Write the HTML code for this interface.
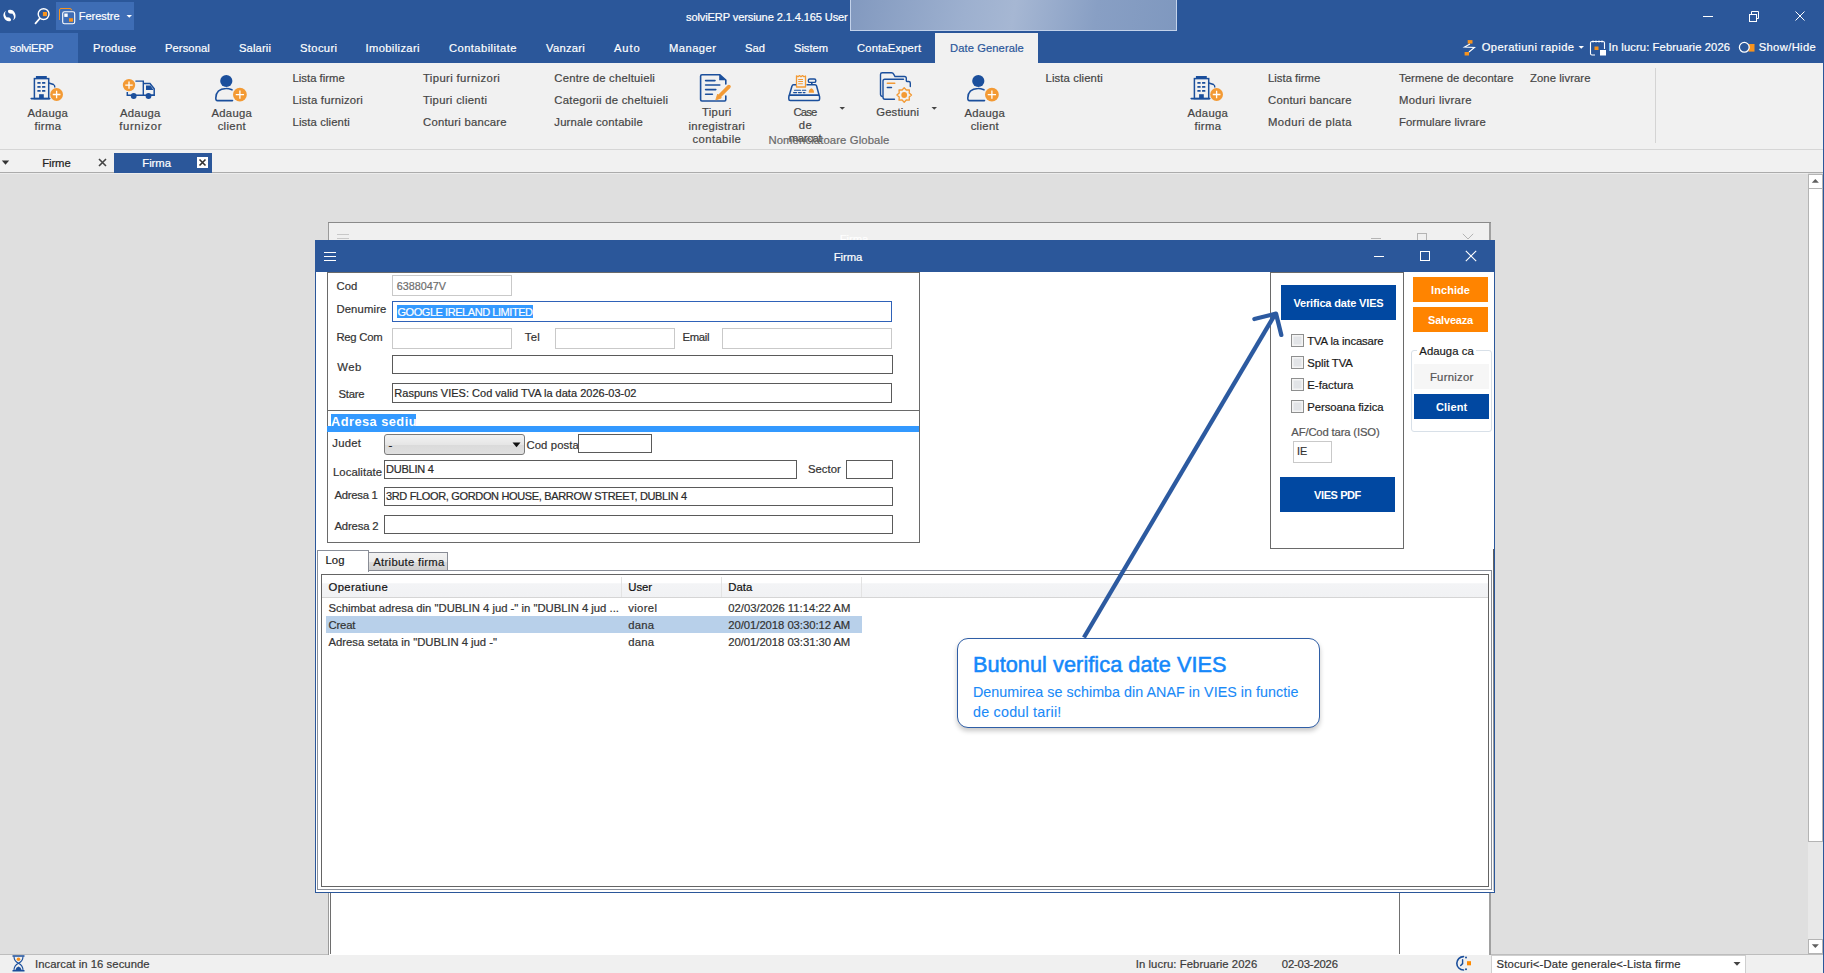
<!DOCTYPE html>
<html><head><meta charset="utf-8"><title>solviERP</title>
<style>
html,body{margin:0;padding:0;width:1824px;height:973px;overflow:hidden;background:#dfdfdf;}
body{position:relative;font-family:"Liberation Sans",sans-serif;}
.t{position:absolute;white-space:nowrap;-webkit-text-stroke:0.2px currentColor;}
.b{position:absolute;box-sizing:content-box;}
svg.b{overflow:visible;}
</style></head><body>
<div class="b" style="left:0px;top:0px;width:1824px;height:63px;background:#2b579a"></div>
<div class="b" style="left:0px;top:63px;width:1824px;height:87px;background:#f1f1f1"></div>
<div class="b" style="left:0px;top:149px;width:1824px;height:1px;background:#d6d6d6"></div>
<div class="b" style="left:0px;top:150px;width:1824px;height:22px;background:#f1f1f1"></div>
<div class="b" style="left:0px;top:172px;width:1824px;height:1px;background:#ababab"></div>
<div class="b" style="left:0px;top:173px;width:1824px;height:781px;background:#dfdfdf"></div>
<div class="b" style="left:0px;top:173px;width:1808px;height:1px;background:#ececec"></div>
<div class="b" style="left:0px;top:954px;width:1824px;height:1px;background:#bdbdbd"></div>
<div class="b" style="left:0px;top:955px;width:1824px;height:18px;background:#f0f0f0"></div>
<div class="b" style="left:1823px;top:63px;width:1px;height:910px;background:#2b579a"></div>
<svg class="b" style="left:0px;top:0px" width="20" height="32" viewBox="0 0 20 32"><path d="M8.3 9.9 A5.8 5.8 0 0 1 13 20.3 A4.9 4.9 0 0 0 12.2 13.6 Q10.6 13.9 9.2 13.3 Q7.2 12.2 8.3 9.9Z" fill="#fff"/><path d="M8.3 9.9 A5.8 5.8 0 0 1 13 20.3 A4.9 4.9 0 0 0 12.2 13.6 Q10.6 13.9 9.2 13.3 Q7.2 12.2 8.3 9.9Z" fill="#fff" transform="rotate(180 9.5 15.5)"/></svg>
<svg class="b" style="left:33px;top:6px" width="18" height="20" viewBox="0 0 18 20"><circle cx="10.6" cy="8.1" r="5.4" fill="none" stroke="#fff" stroke-width="1.4"/><line x1="2.5" y1="17.3" x2="6.7" y2="12.5" stroke="#fff" stroke-width="1.8" stroke-linecap="round"/><rect x="9.9" y="6" width="4.1" height="4.1" fill="#f7931e"/></svg>
<div class="b" style="left:56px;top:2px;width:78px;height:28px;background:#3e6db5"></div>
<svg class="b" style="left:58px;top:7px" width="20" height="19" viewBox="0 0 20 19"><path d="M1.5 13 V3 Q1.5 1.5 3 1.5 H12 Q13.5 1.5 13.5 3.2" fill="none" stroke="#f7931e" stroke-width="1"/><rect x="4.7" y="4.7" width="12" height="12" rx="1.8" fill="none" stroke="#fff" stroke-width="1.1"/><rect x="6.3" y="6.5" width="3.4" height="3.4" fill="#fff"/><rect x="11" y="11.2" width="4" height="3.5" fill="#f7931e"/></svg>
<div class="t" style="left:78.80px;top:11.49px;font-size:11px;line-height:11px;color:#fff;font-weight:normal;letter-spacing:-0.024px;">Ferestre</div>
<svg class="b" style="left:126px;top:14px" width="7" height="5" viewBox="0 0 7 5"><path d="M0.5 1 H6 L3.25 3.8Z" fill="#fff"/></svg>
<div class="t" style="left:686.00px;top:12.00px;font-size:11.1px;line-height:11.1px;color:#fff;font-weight:normal;letter-spacing:-0.125px;">solviERP versiune 2.1.4.165 User</div>
<div class="b" style="left:850px;top:0;width:325px;height:30px;border:1px solid #c3d2ea;border-top:none;background:linear-gradient(100deg,#8299bf 0%,#9db0cf 35%,#a6b7d3 50%,#889fc4 75%,#7f98bf 100%)"></div>
<div class="b" style="left:1703px;top:16px;width:10px;height:1px;background:#fff"></div>
<svg class="b" style="left:1748px;top:10px" width="12" height="12" viewBox="0 0 12 12"><rect x="1.5" y="4.5" width="7" height="7" fill="none" stroke="#fff" stroke-width="1"/><path d="M3.5 4.5 V1.5 H10.5 V8.5 H8.5" fill="none" stroke="#fff" stroke-width="1"/></svg>
<svg class="b" style="left:1795px;top:11px" width="10" height="10" viewBox="0 0 10 10"><path d="M0.5 0.5 L9.5 9.5 M9.5 0.5 L0.5 9.5" stroke="#fff" stroke-width="1"/></svg>
<div class="b" style="left:0px;top:33px;width:78px;height:30px;background:#3e6db5"></div>
<div class="b" style="left:935px;top:33px;width:103px;height:30px;background:#f1f1f1"></div>
<div class="t" style="left:10.00px;top:42.52px;font-size:11.2px;line-height:11.2px;color:#fff;font-weight:normal;letter-spacing:-0.270px;">solviERP</div>
<div class="t" style="left:93.00px;top:42.52px;font-size:11.2px;line-height:11.2px;color:#fff;font-weight:normal;letter-spacing:0.221px;">Produse</div>
<div class="t" style="left:165.00px;top:42.52px;font-size:11.2px;line-height:11.2px;color:#fff;font-weight:normal;letter-spacing:0.085px;">Personal</div>
<div class="t" style="left:239.00px;top:42.52px;font-size:11.2px;line-height:11.2px;color:#fff;font-weight:normal;letter-spacing:0.151px;">Salarii</div>
<div class="t" style="left:300.00px;top:42.52px;font-size:11.2px;line-height:11.2px;color:#fff;font-weight:normal;letter-spacing:0.362px;">Stocuri</div>
<div class="t" style="left:365.50px;top:42.52px;font-size:11.2px;line-height:11.2px;color:#fff;font-weight:normal;letter-spacing:0.364px;">Imobilizari</div>
<div class="t" style="left:449.00px;top:42.52px;font-size:11.2px;line-height:11.2px;color:#fff;font-weight:normal;letter-spacing:0.433px;">Contabilitate</div>
<div class="t" style="left:546.00px;top:42.52px;font-size:11.2px;line-height:11.2px;color:#fff;font-weight:normal;letter-spacing:0.282px;">Vanzari</div>
<div class="t" style="left:614.00px;top:42.52px;font-size:11.2px;line-height:11.2px;color:#fff;font-weight:normal;letter-spacing:0.895px;">Auto</div>
<div class="t" style="left:669.00px;top:42.52px;font-size:11.2px;line-height:11.2px;color:#fff;font-weight:normal;letter-spacing:0.457px;">Manager</div>
<div class="t" style="left:745.00px;top:42.52px;font-size:11.2px;line-height:11.2px;color:#fff;font-weight:normal;letter-spacing:0.047px;">Sad</div>
<div class="t" style="left:794.00px;top:42.52px;font-size:11.2px;line-height:11.2px;color:#fff;font-weight:normal;letter-spacing:-0.041px;">Sistem</div>
<div class="t" style="left:857.00px;top:42.52px;font-size:11.2px;line-height:11.2px;color:#fff;font-weight:normal;letter-spacing:0.181px;">ContaExpert</div>
<div class="t" style="left:950.00px;top:42.52px;font-size:11.2px;line-height:11.2px;color:#2b579a;font-weight:normal;letter-spacing:0.086px;">Date Generale</div>
<svg class="b" style="left:1462px;top:39px" width="14" height="18" viewBox="0 0 14 18"><rect x="5.7" y="1.1" width="4.8" height="3.5" fill="#f7931e"/><rect x="2.6" y="13" width="4.4" height="3.5" fill="#f7931e"/><path d="M8 5 L2.5 8 L12.5 8.5 L7 13" fill="none" stroke="#fff" stroke-width="1.1"/></svg>
<div class="t" style="left:1481.70px;top:41.52px;font-size:11.2px;line-height:11.2px;color:#fff;font-weight:normal;letter-spacing:0.404px;">Operatiuni rapide</div>
<svg class="b" style="left:1578px;top:45px" width="7" height="5" viewBox="0 0 7 5"><path d="M0.5 1 H6 L3.25 3.8Z" fill="#fff"/></svg>
<svg class="b" style="left:1589px;top:39px" width="18" height="18" viewBox="0 0 18 18"><path d="M6 16 H3 Q1.5 16 1.5 14.5 V4 Q1.5 2.5 3 2.5 H14 Q15.5 2.5 15.5 4 V10" fill="none" stroke="#fff" stroke-width="1.1"/><path d="M4 1.5 v2 M7 1.5 v2 M10 1.5 v2 M13 1.5 v2" stroke="#fff" stroke-width="1"/><rect x="5.5" y="7.5" width="4" height="3.5" fill="#f7931e"/><rect x="11" y="11" width="6" height="5.5" fill="#fff"/></svg>
<div class="t" style="left:1608.50px;top:41.52px;font-size:11.2px;line-height:11.2px;color:#fff;font-weight:normal;letter-spacing:0.118px;">In lucru: Februarie 2026</div>
<svg class="b" style="left:1738px;top:41px" width="18" height="13" viewBox="0 0 18 13"><rect x="10.5" y="3" width="6" height="7.6" fill="#f7931e"/><circle cx="6.3" cy="6.3" r="4.9" fill="#2b579a" stroke="#fff" stroke-width="1.3"/></svg>
<div class="t" style="left:1758.70px;top:41.52px;font-size:11.2px;line-height:11.2px;color:#fff;font-weight:normal;letter-spacing:0.374px;">Show/Hide</div>
<svg class="b" style="left:25px;top:68px" width="50" height="40" viewBox="0 0 50 40"><rect x="10.9" y="8" width="10.9" height="2.3" fill="#1b4f9c"/><rect x="9.4" y="10.6" width="14.3" height="20" fill="none" stroke="#1b4f9c" stroke-width="1.5"/><line x1="6.2" y1="30.6" x2="24.7" y2="30.6" stroke="#1b4f9c" stroke-width="1.6" stroke-linecap="round"/><rect x="12.3" y="14" width="3.4" height="1.8" rx="0.6" fill="#1b4f9c"/><rect x="12.3" y="18" width="3.4" height="1.8" rx="0.6" fill="#1b4f9c"/><rect x="12.3" y="22" width="3.4" height="1.8" rx="0.6" fill="#1b4f9c"/><rect x="17" y="14" width="3.4" height="1.8" rx="0.6" fill="#1b4f9c"/><rect x="17" y="18" width="3.4" height="1.8" rx="0.6" fill="#1b4f9c"/><rect x="17" y="22" width="3.4" height="1.8" rx="0.6" fill="#1b4f9c"/><rect x="14.1" y="26.2" width="4.7" height="4.4" fill="#1b4f9c"/><path d="M23.8 15 L28.5 16.5 Q30 17.3 29.8 19.5" fill="none" stroke="#1b4f9c" stroke-width="1.4"/><circle cx="31.6" cy="26.5" r="6.4" fill="#f39a34"/><path d="M27.76 26.5 H35.44 M31.6 22.66 V30.34" stroke="#fff" stroke-width="1.3"/></svg>
<div class="t" style="left:-102.50px;width:300px;text-align:center;top:107.73px;font-size:11.3px;line-height:11.3px;color:#454545;font-weight:normal;letter-spacing:0.309px;padding-left:0.309px;">Adauga</div>
<div class="t" style="left:-102.50px;width:300px;text-align:center;top:121.23px;font-size:11.3px;line-height:11.3px;color:#454545;font-weight:normal;letter-spacing:0.348px;padding-left:0.348px;">firma</div>
<svg class="b" style="left:115px;top:68px" width="50" height="40" viewBox="0 0 50 40"><path d="M20.4 13.1 H28.3 V27.3" fill="none" stroke="#1b4f9c" stroke-width="1.4"/><path d="M28.8 15.6 H35 L39.2 20.8 V27.2 H35" fill="none" stroke="#1b4f9c" stroke-width="1.5"/><path d="M31 17.6 H35.5 L38.5 21.9 H31Z" fill="#1b4f9c"/><path d="M12.3 24 V27.3 H39.5" fill="none" stroke="#1b4f9c" stroke-width="1.5"/><circle cx="18.7" cy="28" r="2.9" fill="#1b4f9c"/><circle cx="33.5" cy="28" r="2.9" fill="#1b4f9c"/><circle cx="14" cy="17.1" r="6.2" fill="#f39a34"/><path d="M10.28 17.1 H17.72 M14 13.38 V20.82" stroke="#fff" stroke-width="1.3"/></svg>
<div class="t" style="left:-10.00px;width:300px;text-align:center;top:107.73px;font-size:11.3px;line-height:11.3px;color:#454545;font-weight:normal;letter-spacing:0.309px;padding-left:0.309px;">Adauga</div>
<div class="t" style="left:-10.00px;width:300px;text-align:center;top:121.23px;font-size:11.3px;line-height:11.3px;color:#454545;font-weight:normal;letter-spacing:0.647px;padding-left:0.647px;">furnizor</div>
<svg class="b" style="left:207px;top:68px" width="50" height="40" viewBox="0 0 50 40"><ellipse cx="19.3" cy="13" rx="6.1" ry="6.1" fill="#1b4f9c"/><path d="M25 21.8 Q21 20.3 19 20.5 Q9 20.8 8.8 30 Q8.7 32.6 10.5 32.6 H25.5" fill="none" stroke="#1b4f9c" stroke-width="1.6" stroke-linecap="round"/><circle cx="32.9" cy="26.7" r="6.9" fill="#f39a34"/><path d="M28.76 26.7 H37.04 M32.9 22.56 V30.84" stroke="#fff" stroke-width="1.3"/></svg>
<div class="t" style="left:81.50px;width:300px;text-align:center;top:107.73px;font-size:11.3px;line-height:11.3px;color:#454545;font-weight:normal;letter-spacing:0.309px;padding-left:0.309px;">Adauga</div>
<div class="t" style="left:81.50px;width:300px;text-align:center;top:121.23px;font-size:11.3px;line-height:11.3px;color:#454545;font-weight:normal;letter-spacing:0.325px;padding-left:0.325px;">client</div>
<div class="t" style="left:292.50px;top:72.73px;font-size:11.3px;line-height:11.3px;color:#454545;font-weight:normal;letter-spacing:0.019px;">Lista firme</div>
<div class="t" style="left:292.50px;top:94.63px;font-size:11.3px;line-height:11.3px;color:#454545;font-weight:normal;letter-spacing:0.219px;">Lista furnizori</div>
<div class="t" style="left:292.50px;top:116.53px;font-size:11.3px;line-height:11.3px;color:#454545;font-weight:normal;letter-spacing:0.117px;">Lista clienti</div>
<div class="t" style="left:423.00px;top:72.73px;font-size:11.3px;line-height:11.3px;color:#454545;font-weight:normal;letter-spacing:0.376px;">Tipuri furnizori</div>
<div class="t" style="left:423.00px;top:94.63px;font-size:11.3px;line-height:11.3px;color:#454545;font-weight:normal;letter-spacing:0.311px;">Tipuri clienti</div>
<div class="t" style="left:423.00px;top:116.53px;font-size:11.3px;line-height:11.3px;color:#454545;font-weight:normal;letter-spacing:0.229px;">Conturi bancare</div>
<div class="t" style="left:554.30px;top:72.73px;font-size:11.3px;line-height:11.3px;color:#454545;font-weight:normal;letter-spacing:0.204px;">Centre de cheltuieli</div>
<div class="t" style="left:554.30px;top:94.63px;font-size:11.3px;line-height:11.3px;color:#454545;font-weight:normal;letter-spacing:0.258px;">Categorii de cheltuieli</div>
<div class="t" style="left:554.30px;top:116.53px;font-size:11.3px;line-height:11.3px;color:#454545;font-weight:normal;letter-spacing:0.192px;">Jurnale contabile</div>
<div class="t" style="left:1268.00px;top:72.73px;font-size:11.3px;line-height:11.3px;color:#454545;font-weight:normal;letter-spacing:0.019px;">Lista firme</div>
<div class="t" style="left:1268.00px;top:94.63px;font-size:11.3px;line-height:11.3px;color:#454545;font-weight:normal;letter-spacing:0.229px;">Conturi bancare</div>
<div class="t" style="left:1268.00px;top:116.53px;font-size:11.3px;line-height:11.3px;color:#454545;font-weight:normal;letter-spacing:0.409px;">Moduri de plata</div>
<div class="t" style="left:1399.00px;top:72.73px;font-size:11.3px;line-height:11.3px;color:#454545;font-weight:normal;letter-spacing:0.076px;">Termene de decontare</div>
<div class="t" style="left:1399.00px;top:94.63px;font-size:11.3px;line-height:11.3px;color:#454545;font-weight:normal;letter-spacing:0.320px;">Moduri livrare</div>
<div class="t" style="left:1399.00px;top:116.53px;font-size:11.3px;line-height:11.3px;color:#454545;font-weight:normal;letter-spacing:0.083px;">Formulare livrare</div>
<div class="t" style="left:1530.00px;top:72.73px;font-size:11.3px;line-height:11.3px;color:#454545;font-weight:normal;letter-spacing:0.077px;">Zone livrare</div>
<div class="t" style="left:1045.50px;top:72.73px;font-size:11.3px;line-height:11.3px;color:#454545;font-weight:normal;letter-spacing:0.117px;">Lista clienti</div>
<svg class="b" style="left:692px;top:68px" width="50" height="40" viewBox="0 0 50 40"><path d="M33.8 16 V12 L27.6 6.7 H10 Q8.6 6.7 8.6 8.2 V31.6 Q8.6 33 10 33 H32.6 Q33.8 33 33.8 31.6 V28" fill="none" stroke="#1b4f9c" stroke-width="1.6" stroke-linejoin="round" stroke-linecap="round"/><path d="M27.2 6.8 L33.8 12.2 H27.2Z" fill="#1b4f9c"/><path d="M13.6 12.6 H23 M13.6 17 H27.8 M13.6 21.6 H23.8 M13.6 26.3 H20.4" stroke="#1b4f9c" stroke-width="1.6" stroke-linecap="round"/><line x1="36.9" y1="18.6" x2="27.8" y2="27.7" stroke="#f39a34" stroke-width="3.7" stroke-linecap="round"/><path d="M25.6 26.1 L29.4 29.9 L23.8 31.9Z" fill="#f39a34" stroke="#f39a34" stroke-width="0.8" stroke-linejoin="round"/></svg>
<div class="t" style="left:566.50px;width:300px;text-align:center;top:106.93px;font-size:11.3px;line-height:11.3px;color:#454545;font-weight:normal;letter-spacing:0.311px;padding-left:0.311px;">Tipuri</div>
<div class="t" style="left:566.50px;width:300px;text-align:center;top:120.73px;font-size:11.3px;line-height:11.3px;color:#454545;font-weight:normal;letter-spacing:0.333px;padding-left:0.333px;">inregistrari</div>
<div class="t" style="left:566.50px;width:300px;text-align:center;top:133.73px;font-size:11.3px;line-height:11.3px;color:#454545;font-weight:normal;letter-spacing:0.396px;padding-left:0.396px;">contabile</div>
<svg class="b" style="left:780px;top:68px" width="50" height="40" viewBox="0 0 50 40"><path d="M16.5 19 V7.8 L18 8.8 L19.5 7.6 L21 8.8 L22.5 7.6 L24 8.8 L25.5 8 V19Z" fill="none" stroke="#f39a34" stroke-width="1.3" stroke-linejoin="round"/><path d="M18.2 11.5 H23 M18.2 13.5 H23 M18.2 15.7 H22.8" stroke="#f39a34" stroke-width="1.1"/><rect x="28.3" y="11" width="7.5" height="3.4" rx="1.5" fill="none" stroke="#1b4f9c" stroke-width="1.4"/><path d="M31.8 14.5 V16.6" stroke="#1b4f9c" stroke-width="1.6"/><path d="M16 16.8 H13.5 Q12.3 16.8 12 18 L9.3 27.3 H39.1 L36.6 18 Q36.3 16.8 35 16.8 H26.5" fill="none" stroke="#1b4f9c" stroke-width="1.5" stroke-linejoin="round"/><rect x="8.8" y="27.3" width="30.8" height="5.2" rx="1.5" fill="none" stroke="#1b4f9c" stroke-width="1.5"/><path d="M14.5 22.3 H20.5 M22.4 22.3 H25.8 M13.6 24.6 H16.6 M18.4 24.6 H21.4 M23.2 24.6 H25" stroke="#1b4f9c" stroke-width="1.1" stroke-linecap="round"/><path d="M28.7 24.8 Q28.5 21.5 31.4 20.3 Q34.2 21.5 34 24.8Z" fill="#f39a34"/></svg>
<div class="t" style="left:655.00px;width:300px;text-align:center;top:106.73px;font-size:11.3px;line-height:11.3px;color:#454545;font-weight:normal;letter-spacing:-0.792px;padding-left:-0.792px;">Case</div>
<div class="t" style="left:655.00px;width:300px;text-align:center;top:120.43px;font-size:11.3px;line-height:11.3px;color:#454545;font-weight:normal;letter-spacing:0.522px;padding-left:0.522px;">de</div>
<div class="t" style="left:655.00px;width:300px;text-align:center;top:133.43px;font-size:11.3px;line-height:11.3px;color:#454545;font-weight:normal;letter-spacing:-0.306px;padding-left:-0.306px;">marcat</div>
<svg class="b" style="left:839px;top:106px" width="7" height="5" viewBox="0 0 7 5"><path d="M0.5 1 H6 L3.25 3.8Z" fill="#444"/></svg>
<div class="t" style="left:768.40px;top:134.93px;font-size:11.3px;line-height:11.3px;color:#6a6a6a;font-weight:normal;letter-spacing:0.116px;">Nomenclatoare Globale</div>
<svg class="b" style="left:872px;top:66px" width="50" height="40" viewBox="0 0 50 40"><path d="M10.2 30.5 Q8.5 30 8.5 28.5 V8.5 Q8.5 6.8 10.3 6.8 H19.5 Q21 6.8 21.8 8.3 L23 10.5 H32.5 Q34.3 10.5 34.3 12.3 V14.8 Q34.3 15.5 35 15.5 H36.8 Q38.3 15.5 38.3 17 V20.5" fill="none" stroke="#1b4f9c" stroke-width="1.4" stroke-linecap="round"/><path d="M31.5 13.2 H12.8 Q11 13.2 11 15 V31 Q11 33.2 13 33.2 H22.5" fill="none" stroke="#1b4f9c" stroke-width="1.4" stroke-linecap="round"/><path d="M15.3 17.3 H22.8" stroke="#f39a34" stroke-width="1.4" stroke-linecap="round"/><path d="M15.3 21.5 H19.5" stroke="#1b4f9c" stroke-width="1.4" stroke-linecap="round"/><polygon points="32.20,21.70 34.27,24.01 37.36,23.84 37.19,26.93 39.50,29.00 37.19,31.07 37.36,34.16 34.27,33.99 32.20,36.30 30.13,33.99 27.04,34.16 27.21,31.07 24.90,29.00 27.21,26.93 27.04,23.84 30.13,24.01" fill="#f1f1f1" stroke="#f39a34" stroke-width="1.3" stroke-linejoin="round"/><circle cx="32.2" cy="29" r="2.9" fill="#f39a34"/></svg>
<div class="t" style="left:747.50px;width:300px;text-align:center;top:106.73px;font-size:11.3px;line-height:11.3px;color:#454545;font-weight:normal;letter-spacing:0.207px;padding-left:0.207px;">Gestiuni</div>
<svg class="b" style="left:931px;top:106px" width="7" height="5" viewBox="0 0 7 5"><path d="M0.5 1 H6 L3.25 3.8Z" fill="#444"/></svg>
<svg class="b" style="left:959px;top:68px" width="50" height="40" viewBox="0 0 50 40"><ellipse cx="19.3" cy="13" rx="6.1" ry="6.1" fill="#1b4f9c"/><path d="M25 21.8 Q21 20.3 19 20.5 Q9 20.8 8.8 30 Q8.7 32.6 10.5 32.6 H25.5" fill="none" stroke="#1b4f9c" stroke-width="1.6" stroke-linecap="round"/><circle cx="32.9" cy="26.7" r="6.9" fill="#f39a34"/><path d="M28.76 26.7 H37.04 M32.9 22.56 V30.84" stroke="#fff" stroke-width="1.3"/></svg>
<div class="t" style="left:834.50px;width:300px;text-align:center;top:107.73px;font-size:11.3px;line-height:11.3px;color:#454545;font-weight:normal;letter-spacing:0.309px;padding-left:0.309px;">Adauga</div>
<div class="t" style="left:834.50px;width:300px;text-align:center;top:121.43px;font-size:11.3px;line-height:11.3px;color:#454545;font-weight:normal;letter-spacing:0.325px;padding-left:0.325px;">client</div>
<svg class="b" style="left:1185px;top:68px" width="50" height="40" viewBox="0 0 50 40"><rect x="10.9" y="8" width="10.9" height="2.3" fill="#1b4f9c"/><rect x="9.4" y="10.6" width="14.3" height="20" fill="none" stroke="#1b4f9c" stroke-width="1.5"/><line x1="6.2" y1="30.6" x2="24.7" y2="30.6" stroke="#1b4f9c" stroke-width="1.6" stroke-linecap="round"/><rect x="12.3" y="14" width="3.4" height="1.8" rx="0.6" fill="#1b4f9c"/><rect x="12.3" y="18" width="3.4" height="1.8" rx="0.6" fill="#1b4f9c"/><rect x="12.3" y="22" width="3.4" height="1.8" rx="0.6" fill="#1b4f9c"/><rect x="17" y="14" width="3.4" height="1.8" rx="0.6" fill="#1b4f9c"/><rect x="17" y="18" width="3.4" height="1.8" rx="0.6" fill="#1b4f9c"/><rect x="17" y="22" width="3.4" height="1.8" rx="0.6" fill="#1b4f9c"/><rect x="14.1" y="26.2" width="4.7" height="4.4" fill="#1b4f9c"/><path d="M23.8 15 L28.5 16.5 Q30 17.3 29.8 19.5" fill="none" stroke="#1b4f9c" stroke-width="1.4"/><circle cx="31.6" cy="26.5" r="6.4" fill="#f39a34"/><path d="M27.76 26.5 H35.44 M31.6 22.66 V30.34" stroke="#fff" stroke-width="1.3"/></svg>
<div class="t" style="left:1057.50px;width:300px;text-align:center;top:107.73px;font-size:11.3px;line-height:11.3px;color:#454545;font-weight:normal;letter-spacing:0.309px;padding-left:0.309px;">Adauga</div>
<div class="t" style="left:1057.50px;width:300px;text-align:center;top:121.43px;font-size:11.3px;line-height:11.3px;color:#454545;font-weight:normal;letter-spacing:0.348px;padding-left:0.348px;">firma</div>
<div class="b" style="left:1655px;top:68px;width:1px;height:75px;background:#d4d4d4"></div>
<svg class="b" style="left:1px;top:159px" width="9" height="7" viewBox="0 0 9 7"><path d="M0.8 1.5 H8.2 L4.5 5.8Z" fill="#333"/></svg>
<div class="t" style="left:42.20px;top:158.13px;font-size:11.3px;line-height:11.3px;color:#222;font-weight:normal;letter-spacing:-0.094px;">Firme</div>
<svg class="b" style="left:98px;top:158px" width="9" height="9" viewBox="0 0 9 9"><path d="M1 1 L8 8 M8 1 L1 8" stroke="#444" stroke-width="1.6"/></svg>
<div class="b" style="left:114px;top:153px;width:98px;height:20px;background:#2b579a"></div>
<div class="t" style="left:142.30px;top:158.13px;font-size:11.3px;line-height:11.3px;color:#fff;font-weight:normal;letter-spacing:-0.044px;">Firma</div>
<div class="b" style="left:197px;top:157px;width:11px;height:11px;background:#fff"></div>
<svg class="b" style="left:197px;top:157px" width="11" height="11" viewBox="0 0 11 11"><path d="M2.5 2.5 L8.5 8.5 M8.5 2.5 L2.5 8.5" stroke="#333" stroke-width="1.6"/></svg>
<div class="b" style="left:1808px;top:174px;width:15px;height:780px;background:#e8e8e8"></div>
<div class="b" style="left:1808px;top:174px;width:13px;height:13px;background:#fff;border:1px solid #b4b4b4"></div>
<svg class="b" style="left:1811px;top:178px" width="9" height="6" viewBox="0 0 9 6"><path d="M0.8 4.8 H7.9 L4.35 1Z" fill="#606060"/></svg>
<div class="b" style="left:1808px;top:189px;width:13px;height:652px;background:#fff;border:1px solid #b4b4b4;border-top:none"></div>
<div class="b" style="left:1808px;top:939px;width:13px;height:13px;background:#fff;border:1px solid #b4b4b4"></div>
<svg class="b" style="left:1811px;top:943px" width="9" height="6" viewBox="0 0 9 6"><path d="M0.8 1.2 H7.9 L4.35 5Z" fill="#606060"/></svg>
<div class="b" style="left:328px;top:222px;width:1160px;height:732px;background:#fff;border:1px solid #9a9a9a;border-bottom:none;border-right:2px solid #a0a0a0"></div>
<div class="b" style="left:329px;top:223px;width:1160px;height:17px;background:#f0f0f0"></div>
<div class="b" style="left:337px;top:234px;width:12px;height:1px;background:#c8c8c8"></div>
<div class="b" style="left:337px;top:238px;width:12px;height:1px;background:#c8c8c8"></div>
<div class="b" style="left:1371px;top:238px;width:10px;height:1px;background:#b4b4b4"></div>
<div class="b" style="left:1417px;top:233px;width:8px;height:10px;border:1px solid #b4b4b4;border-bottom:none"></div>
<svg class="b" style="left:1462px;top:233px" width="12" height="8" viewBox="0 0 12 8"><path d="M0.8 0.8 L6 6 L11.2 0.8" fill="none" stroke="#b4b4b4" stroke-width="1"/></svg>
<div class="t" style="left:839.70px;top:233.93px;font-size:11.3px;line-height:11.3px;color:#fff;font-weight:normal;letter-spacing:-0.044px;">Firma</div>
<div class="b" style="left:328px;top:222px;width:1163px;height:1px;background:#8a8a8a"></div>
<div class="b" style="left:1399px;top:892px;width:1px;height:62px;background:#707070"></div>
<div class="b" style="left:329px;top:892px;width:1px;height:62px;background:#ffffff"></div>
<div class="b" style="left:330px;top:892px;width:1px;height:62px;background:#6e6e6e"></div>
<div class="b" style="left:315px;top:240px;width:1178px;height:651px;background:#fff;border:1px solid #2b579a"></div>
<div class="b" style="left:315px;top:240px;width:1179px;height:32px;background:#2b579a"></div>
<div class="b" style="left:324px;top:252px;width:12px;height:1px;background:#fff"></div>
<div class="b" style="left:324px;top:256px;width:12px;height:1px;background:#fff"></div>
<div class="b" style="left:324px;top:260px;width:12px;height:1px;background:#fff"></div>
<div class="t" style="left:698.00px;width:300px;text-align:center;top:251.93px;font-size:11.3px;line-height:11.3px;color:#fff;font-weight:normal;letter-spacing:-0.044px;padding-left:-0.044px;">Firma</div>
<div class="b" style="left:1374px;top:256px;width:10px;height:1px;background:#fff"></div>
<div class="b" style="left:1420px;top:251px;width:8px;height:8px;border:1px solid #fff"></div>
<svg class="b" style="left:1465px;top:250px" width="12" height="12" viewBox="0 0 12 12"><path d="M0.8 0.8 L11.2 11.2 M11.2 0.8 L0.8 11.2" stroke="#fff" stroke-width="1.1"/></svg>
<div class="b" style="left:327px;top:272px;width:591px;height:269px;border:1px solid #6a6a6a;border-top:1px solid #6a6a6a"></div>
<div class="b" style="left:327px;top:410px;width:592px;height:1px;background:#6a6a6a"></div>
<div class="t" style="left:336.40px;top:281.43px;font-size:11.3px;line-height:11.3px;color:#333;font-weight:normal;letter-spacing:0.133px;">Cod</div>
<div class="b" style="left:392px;top:275px;width:118px;height:19px;border:1px solid #c9c9c9"></div>
<div class="t" style="left:396.70px;top:280.86px;font-size:10.8px;line-height:10.8px;color:#6d6d6d;font-weight:normal;">6388047V</div>
<div class="t" style="left:336.40px;top:304.43px;font-size:11.3px;line-height:11.3px;color:#333;font-weight:normal;letter-spacing:0.145px;">Denumire</div>
<div class="b" style="left:392px;top:301px;width:498px;height:19px;border:1px solid #2f62b8"></div>
<div class="b" style="left:397px;top:305px;width:136px;height:13px;background:#3399ff"></div>
<div class="t" style="left:397.50px;top:306.69px;font-size:11px;line-height:11px;color:#fff;font-weight:normal;letter-spacing:-0.446px;">GOOGLE IRELAND LIMITED</div>
<div class="t" style="left:336.40px;top:332.43px;font-size:11.3px;line-height:11.3px;color:#333;font-weight:normal;letter-spacing:-0.253px;">Reg Com</div>
<div class="b" style="left:392px;top:328px;width:118px;height:19px;border:1px solid #c9c9c9"></div>
<div class="t" style="left:524.80px;top:332.43px;font-size:11.3px;line-height:11.3px;color:#333;font-weight:normal;letter-spacing:0.273px;">Tel</div>
<div class="b" style="left:555px;top:328px;width:118px;height:19px;border:1px solid #c9c9c9"></div>
<div class="t" style="left:682.40px;top:332.43px;font-size:11.3px;line-height:11.3px;color:#333;font-weight:normal;letter-spacing:-0.287px;">Email</div>
<div class="b" style="left:722px;top:328px;width:168px;height:19px;border:1px solid #c9c9c9"></div>
<div class="t" style="left:337.30px;top:362.03px;font-size:11.3px;line-height:11.3px;color:#333;font-weight:normal;letter-spacing:0.484px;">Web</div>
<div class="b" style="left:392px;top:355px;width:499px;height:17px;border:1px solid #5a5a5a"></div>
<div class="t" style="left:338.40px;top:389.23px;font-size:11.3px;line-height:11.3px;color:#333;font-weight:normal;letter-spacing:-0.204px;">Stare</div>
<div class="b" style="left:392px;top:383px;width:498px;height:18px;border:1px solid #5a5a5a"></div>
<div class="t" style="left:394.30px;top:387.69px;font-size:11px;line-height:11px;color:#2a2a2a;font-weight:normal;letter-spacing:0.010px;">Raspuns VIES: Cod valid TVA la data 2026-03-02</div>
<div class="b" style="left:327px;top:426px;width:592px;height:6px;background:#3399ff"></div>
<div class="b" style="left:331px;top:414px;width:85px;height:14px;background:#3399ff"></div>
<div class="t" style="left:331.00px;top:415.66px;font-size:12.8px;line-height:12.8px;color:#fff;font-weight:bold;letter-spacing:0.466px;-webkit-text-stroke:0;">Adresa sediu</div>
<div class="t" style="left:332.30px;top:438.33px;font-size:11.3px;line-height:11.3px;color:#333;font-weight:normal;letter-spacing:0.215px;">Judet</div>
<div class="b" style="left:384px;top:434px;width:139px;height:19px;border:1px solid #7a7a7a;border-radius:3px;background:linear-gradient(#f2f2f2,#e6e6e6 50%,#dadada 51%,#e0e0e0)"></div>
<div class="t" style="left:388.50px;top:440.43px;font-size:11.3px;line-height:11.3px;color:#222;font-weight:normal;">-</div>
<svg class="b" style="left:512px;top:442px" width="9" height="6" viewBox="0 0 9 6"><path d="M0.5 0.5 H8.5 L4.5 5.2Z" fill="#111"/></svg>
<div class="t" style="left:526.40px;top:440.43px;font-size:11.3px;line-height:11.3px;color:#333;font-weight:normal;letter-spacing:0.125px;">Cod posta</div>
<div class="b" style="left:578px;top:434px;width:72px;height:17px;border:1px solid #5a5a5a"></div>
<div class="t" style="left:333.00px;top:466.63px;font-size:11.3px;line-height:11.3px;color:#333;font-weight:normal;letter-spacing:0.071px;">Localitate</div>
<div class="b" style="left:384px;top:460px;width:411px;height:17px;border:1px solid #5a5a5a"></div>
<div class="t" style="left:386.00px;top:463.69px;font-size:11px;line-height:11px;color:#2a2a2a;font-weight:normal;letter-spacing:-0.219px;">DUBLIN 4</div>
<div class="t" style="left:808.00px;top:464.23px;font-size:11.3px;line-height:11.3px;color:#333;font-weight:normal;letter-spacing:0.019px;">Sector</div>
<div class="b" style="left:846px;top:460px;width:45px;height:17px;border:1px solid #5a5a5a"></div>
<div class="t" style="left:334.50px;top:490.13px;font-size:11.3px;line-height:11.3px;color:#333;font-weight:normal;letter-spacing:-0.274px;">Adresa 1</div>
<div class="b" style="left:384px;top:487px;width:507px;height:17px;border:1px solid #5a5a5a"></div>
<div class="t" style="left:386.00px;top:490.69px;font-size:11px;line-height:11px;color:#2a2a2a;font-weight:normal;letter-spacing:-0.345px;">3RD FLOOR, GORDON HOUSE, BARROW STREET, DUBLIN 4</div>
<div class="t" style="left:334.50px;top:521.43px;font-size:11.3px;line-height:11.3px;color:#333;font-weight:normal;letter-spacing:-0.174px;">Adresa 2</div>
<div class="b" style="left:384px;top:515px;width:507px;height:17px;border:1px solid #5a5a5a"></div>
<div class="b" style="left:1270px;top:272px;width:132px;height:275px;border:1px solid #6a6a6a"></div>
<div class="b" style="left:1281px;top:285px;width:115px;height:35px;background:#0148a1"></div>
<div class="t" style="left:1188.50px;width:300px;text-align:center;top:297.89px;font-size:11px;line-height:11px;color:#fff;font-weight:bold;letter-spacing:-0.161px;padding-left:-0.161px;-webkit-text-stroke:0;">Verifica date VIES</div>
<svg class="b" style="left:1291px;top:334px" width="13" height="13" viewBox="0 0 13 13"><rect x="0.5" y="0.5" width="12" height="12" fill="#f4f4f4" stroke="#8e8f8f"/><rect x="2.5" y="2.5" width="8" height="8" fill="#e2e4e7"/></svg>
<div class="t" style="left:1307.30px;top:336.03px;font-size:11.3px;line-height:11.3px;color:#1a1a1a;font-weight:normal;letter-spacing:-0.142px;">TVA la incasare</div>
<svg class="b" style="left:1291px;top:356px" width="13" height="13" viewBox="0 0 13 13"><rect x="0.5" y="0.5" width="12" height="12" fill="#f4f4f4" stroke="#8e8f8f"/><rect x="2.5" y="2.5" width="8" height="8" fill="#e2e4e7"/></svg>
<div class="t" style="left:1307.30px;top:358.03px;font-size:11.3px;line-height:11.3px;color:#1a1a1a;font-weight:normal;letter-spacing:-0.056px;">Split TVA</div>
<svg class="b" style="left:1291px;top:378px" width="13" height="13" viewBox="0 0 13 13"><rect x="0.5" y="0.5" width="12" height="12" fill="#f4f4f4" stroke="#8e8f8f"/><rect x="2.5" y="2.5" width="8" height="8" fill="#e2e4e7"/></svg>
<div class="t" style="left:1307.30px;top:380.03px;font-size:11.3px;line-height:11.3px;color:#1a1a1a;font-weight:normal;letter-spacing:0.020px;">E-factura</div>
<svg class="b" style="left:1291px;top:400px" width="13" height="13" viewBox="0 0 13 13"><rect x="0.5" y="0.5" width="12" height="12" fill="#f4f4f4" stroke="#8e8f8f"/><rect x="2.5" y="2.5" width="8" height="8" fill="#e2e4e7"/></svg>
<div class="t" style="left:1307.30px;top:402.03px;font-size:11.3px;line-height:11.3px;color:#1a1a1a;font-weight:normal;letter-spacing:-0.068px;">Persoana fizica</div>
<div class="t" style="left:1291.30px;top:426.93px;font-size:11.3px;line-height:11.3px;color:#555;font-weight:normal;letter-spacing:-0.164px;">AF/Cod tara (ISO)</div>
<div class="b" style="left:1293px;top:441px;width:37px;height:20px;border:1px solid #c9c9c9"></div>
<div class="t" style="left:1297.00px;top:446.36px;font-size:10.8px;line-height:10.8px;color:#333;font-weight:normal;">IE</div>
<div class="b" style="left:1280px;top:477px;width:115px;height:35px;background:#0148a1"></div>
<div class="t" style="left:1187.50px;width:300px;text-align:center;top:489.69px;font-size:11px;line-height:11px;color:#fff;font-weight:bold;letter-spacing:-0.418px;padding-left:-0.418px;-webkit-text-stroke:0;">VIES PDF</div>
<div class="b" style="left:1413px;top:277px;width:75px;height:25px;background:#ff8400"></div>
<div class="t" style="left:1300.50px;width:300px;text-align:center;top:284.69px;font-size:11px;line-height:11px;color:#fff;font-weight:bold;letter-spacing:0.064px;padding-left:0.064px;-webkit-text-stroke:0;">Inchide</div>
<div class="b" style="left:1413px;top:307px;width:75px;height:25px;background:#ff8400"></div>
<div class="t" style="left:1300.50px;width:300px;text-align:center;top:314.69px;font-size:11px;line-height:11px;color:#fff;font-weight:bold;letter-spacing:-0.198px;padding-left:-0.198px;-webkit-text-stroke:0;">Salveaza</div>
<div class="b" style="left:1411px;top:350px;width:79px;height:80px;border:1px solid #d8e0e8;border-radius:3px"></div>
<div class="b" style="left:1417px;top:345px;width:59px;height:13px;background:#fff"></div>
<div class="t" style="left:1419.30px;top:346.43px;font-size:11.3px;line-height:11.3px;color:#1a1a1a;font-weight:normal;letter-spacing:0.046px;">Adauga ca</div>
<div class="b" style="left:1414px;top:364px;width:75px;height:25px;background:#f6f6f6"></div>
<div class="t" style="left:1301.50px;width:300px;text-align:center;top:372.43px;font-size:11.3px;line-height:11.3px;color:#555;font-weight:normal;letter-spacing:0.295px;padding-left:0.295px;">Furnizor</div>
<div class="b" style="left:1414px;top:394px;width:75px;height:25px;background:#0148a1"></div>
<div class="t" style="left:1301.50px;width:300px;text-align:center;top:401.69px;font-size:11px;line-height:11px;color:#fff;font-weight:bold;letter-spacing:0.148px;padding-left:0.148px;-webkit-text-stroke:0;">Client</div>
<div class="b" style="left:1493px;top:549px;width:1px;height:342px;background:linear-gradient(#5e5e5e,#9a9a9a 60%,#c8c8c8)"></div>
<div class="b" style="left:317px;top:570px;width:1173px;height:318px;border:1px solid #8a8f99"></div>
<div class="b" style="left:317px;top:550px;width:50px;height:21px;border:1px solid #8a8f99;border-bottom:none;background:#fff"></div>
<div class="t" style="left:325.40px;top:554.93px;font-size:11.3px;line-height:11.3px;color:#1a1a1a;font-weight:normal;letter-spacing:0.170px;">Log</div>
<div class="b" style="left:368px;top:552px;width:78px;height:17px;border:1px solid #898c95;background:linear-gradient(#f2f2f2,#ebebeb 50%,#dddddd 51%,#cfcfcf)"></div>
<div class="t" style="left:373.30px;top:557.23px;font-size:11.3px;line-height:11.3px;color:#1a1a1a;font-weight:normal;letter-spacing:0.293px;">Atribute firma</div>
<div class="b" style="left:321px;top:574px;width:1166px;height:311px;border:1px solid #646464;background:#fff"></div>
<div class="b" style="left:322px;top:575px;width:1166px;height:22px;background:linear-gradient(#ffffff 0%,#ffffff 35%,#f3f4f6 40%,#f1f2f4 100%);border-bottom:1px solid #d5d5d5"></div>
<div class="b" style="left:621px;top:577px;width:1px;height:20px;background:#e3e3e3"></div>
<div class="b" style="left:721px;top:577px;width:1px;height:20px;background:#e3e3e3"></div>
<div class="b" style="left:861px;top:577px;width:1px;height:20px;background:#e3e3e3"></div>
<div class="t" style="left:328.50px;top:582.43px;font-size:11.3px;line-height:11.3px;color:#111;font-weight:normal;letter-spacing:0.372px;">Operatiune</div>
<div class="t" style="left:628.30px;top:582.43px;font-size:11.3px;line-height:11.3px;color:#111;font-weight:normal;letter-spacing:-0.053px;">User</div>
<div class="t" style="left:728.30px;top:582.43px;font-size:11.3px;line-height:11.3px;color:#111;font-weight:normal;letter-spacing:0.042px;">Data</div>
<div class="b" style="left:326px;top:616px;width:536px;height:17px;background:#b8d0ea"></div>
<div class="t" style="left:328.50px;top:602.93px;font-size:11.3px;line-height:11.3px;color:#333;font-weight:normal;letter-spacing:-0.007px;">Schimbat adresa din "DUBLIN 4 jud -" in "DUBLIN 4 jud ...</div>
<div class="t" style="left:628.30px;top:602.93px;font-size:11.3px;line-height:11.3px;color:#333;font-weight:normal;letter-spacing:0.320px;">viorel</div>
<div class="t" style="left:728.30px;top:602.93px;font-size:11.3px;line-height:11.3px;color:#333;font-weight:normal;letter-spacing:-0.013px;">02/03/2026 11:14:22 AM</div>
<div class="t" style="left:328.50px;top:620.03px;font-size:11.3px;line-height:11.3px;color:#333;font-weight:normal;letter-spacing:-0.156px;">Creat</div>
<div class="t" style="left:628.30px;top:620.03px;font-size:11.3px;line-height:11.3px;color:#333;font-weight:normal;letter-spacing:0.186px;">dana</div>
<div class="t" style="left:728.30px;top:620.03px;font-size:11.3px;line-height:11.3px;color:#333;font-weight:normal;letter-spacing:-0.054px;">20/01/2018 03:30:12 AM</div>
<div class="t" style="left:328.50px;top:637.13px;font-size:11.3px;line-height:11.3px;color:#333;font-weight:normal;letter-spacing:-0.008px;">Adresa setata in "DUBLIN 4 jud -"</div>
<div class="t" style="left:628.30px;top:637.13px;font-size:11.3px;line-height:11.3px;color:#333;font-weight:normal;letter-spacing:0.186px;">dana</div>
<div class="t" style="left:728.30px;top:637.13px;font-size:11.3px;line-height:11.3px;color:#333;font-weight:normal;letter-spacing:-0.054px;">20/01/2018 03:31:30 AM</div>
<div class="b" style="left:957px;top:638px;width:361px;height:88px;border:1px solid #2f5ea6;border-radius:11px;background:#fff;box-shadow:0 3px 5px rgba(0,0,0,0.22)"></div>
<div class="t" style="left:973.00px;top:653.63px;font-size:21.7px;line-height:21.7px;color:#1588fa;font-weight:normal;letter-spacing:0.061px;-webkit-text-stroke:0.55px #1588fa;">Butonul verifica date VIES</div>
<div class="t" style="left:973.00px;top:684.70px;font-size:14.3px;line-height:14.3px;color:#1a8af7;font-weight:normal;letter-spacing:0.044px;-webkit-text-stroke:0.1px #1a8af7;">Denumirea se schimba din ANAF in VIES in functie</div>
<div class="t" style="left:973.00px;top:705.30px;font-size:14.3px;line-height:14.3px;color:#1a8af7;font-weight:normal;letter-spacing:0.232px;-webkit-text-stroke:0.1px #1a8af7;">de codul tarii!</div>
<svg class="b" style="left:1070px;top:300px" width="220" height="345" viewBox="0 0 220 345"><path d="M13.9 337.5 L205 14.5" stroke="#2c5aa0" stroke-width="4.3" stroke-linecap="butt"/><path d="M184.4 19 L206 13.6 L211.3 34.9" fill="none" stroke="#2c5aa0" stroke-width="4.3" stroke-linecap="round" stroke-linejoin="round"/></svg>
<svg class="b" style="left:12px;top:955px" width="13" height="17" viewBox="0 0 13 17"><path d="M0.5 1 H12.5 M0.5 15.8 H12.5" stroke="#1b4f9c" stroke-width="1.6"/><path d="M2 1.5 Q2 6 6.5 8.3 Q11 6 11 1.5 M2 15.3 Q2 10.5 6.5 8.3 Q11 10.5 11 15.3" fill="none" stroke="#1b4f9c" stroke-width="1.1"/><circle cx="6.5" cy="4.3" r="1.8" fill="#f7931e"/><path d="M3.2 15.3 Q4 12 6.5 11.5 Q9 12 9.8 15.3Z" fill="#1b4f9c"/></svg>
<div class="t" style="left:35.00px;top:959.23px;font-size:11.3px;line-height:11.3px;color:#3a3a3a;font-weight:normal;letter-spacing:0.044px;">Incarcat in 16 secunde</div>
<div class="t" style="left:1135.80px;top:959.23px;font-size:11.3px;line-height:11.3px;color:#3a3a3a;font-weight:normal;letter-spacing:0.063px;">In lucru: Februarie 2026</div>
<div class="t" style="left:1281.80px;top:959.23px;font-size:11.3px;line-height:11.3px;color:#3a3a3a;font-weight:normal;letter-spacing:-0.177px;">02-03-2026</div>
<svg class="b" style="left:1454px;top:955px" width="18" height="17" viewBox="0 0 18 17"><path d="M9.5 1.6 A6.7 6.7 0 0 0 9.5 15" fill="none" stroke="#1b4f9c" stroke-width="1.6" stroke-linecap="round"/><path d="M8.6 4.6 V8.6 L6.7 10.6" fill="none" stroke="#1b4f9c" stroke-width="1.4" stroke-linecap="round"/><rect x="13" y="6.2" width="4" height="4.1" fill="#ff8a00"/><circle cx="12" cy="2.6" r="1" fill="#1b4f9c"/><circle cx="12" cy="14.2" r="1" fill="#1b4f9c"/></svg>
<div class="b" style="left:1491px;top:955px;width:253px;height:18px;background:#fff;border:1px solid #cfcfcf;border-bottom:none"></div>
<div class="t" style="left:1496.60px;top:959.23px;font-size:11.3px;line-height:11.3px;color:#333;font-weight:normal;letter-spacing:0.148px;">Stocuri&lt;-Date generale&lt;-Lista firme</div>
<svg class="b" style="left:1733px;top:961px" width="8" height="6" viewBox="0 0 8 6"><path d="M0.5 1 H7.5 L4 4.8Z" fill="#444"/></svg>
</body></html>
